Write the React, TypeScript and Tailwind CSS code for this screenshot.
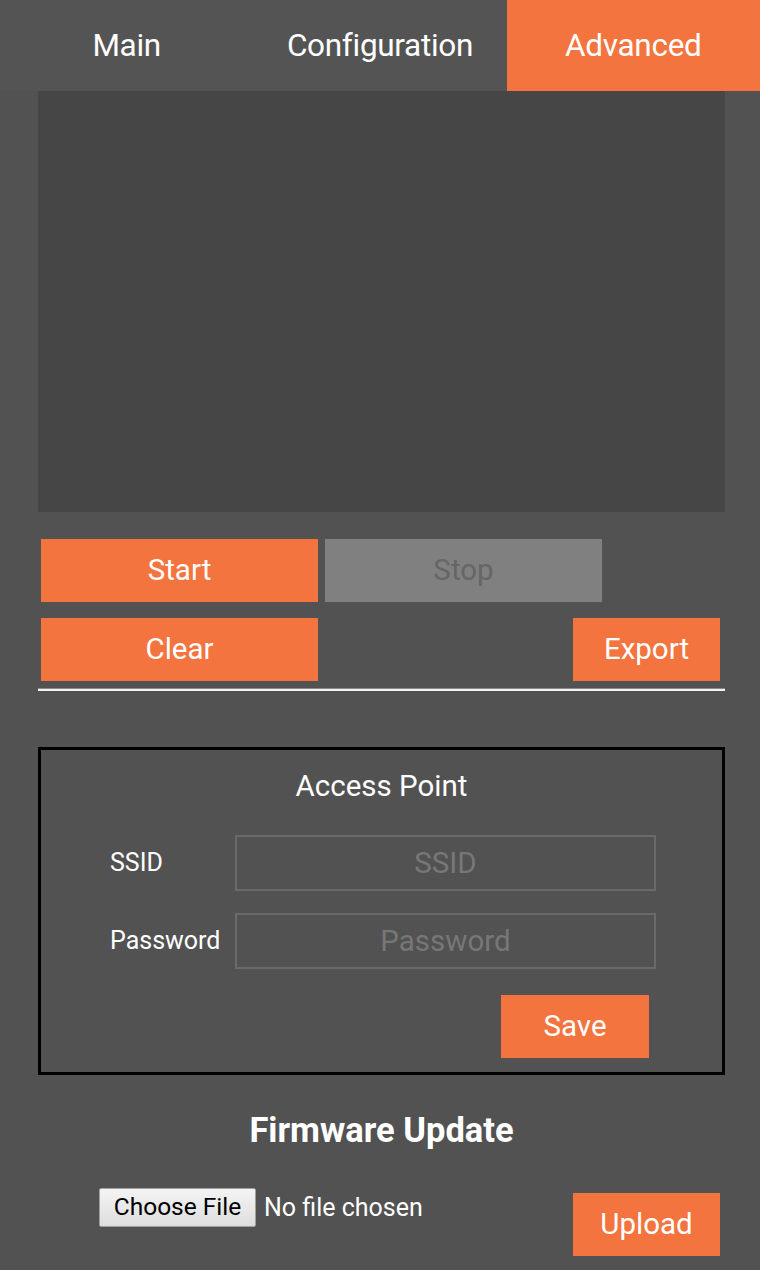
import { useState } from 'react';

const TABS = ['Main', 'Configuration', 'Advanced'];

export default function App() {
    const [tab, setTab] = useState('Advanced');

    return (
        <div className="w-[760px] h-[1270px] bg-[#525252] text-white overflow-hidden" style={{ fontFamily: 'Roboto, "Noto Sans", sans-serif' }}>
            <nav className="flex h-[91px] bg-[#545454]">
                {TABS.map((t) => (
                    <button
                        key={t}
                        onClick={() => setTab(t)}
                        className={`flex-1 text-[31.5px] tracking-[-0.3px] ${tab === t ? 'bg-[#f3743e]' : ''}`}
                    >
                        {t}
                    </button>
                ))}
            </nav>

            <div className="px-[38px] pr-[35px]">
                <div className="h-[421px] bg-[#464646]" />

                <div className="flex gap-[7px] pt-[27px] pl-[3px]">
                    <button className="w-[277px] h-[63px] bg-[#f3743e] text-[29.5px]">Start</button>
                    <button className="w-[277px] h-[63px] bg-[#808080] text-[29.5px] text-[#666666]">Stop</button>
                </div>
                <div className="flex justify-between pt-[16px] pl-[3px] pr-[5px]">
                    <button className="w-[277px] h-[63px] bg-[#f3743e] text-[29.5px]">Clear</button>
                    <button className="w-[147px] h-[63px] bg-[#f3743e] text-[29.5px]">Export</button>
                </div>
                <div className="mt-[7px] border-t border-[#8a8a8a] border-b-2 border-b-[#f2f2f2]" />

                <section className="mt-[56px] h-[328px] border-[3px] border-black flex flex-col">
                    <h3 className="text-[29.5px] text-center pt-[19px] leading-[34px]">Access Point</h3>
                    <div className="flex items-center mt-[32px]">
                        <label className="w-[194px] pl-[69px] text-[25px]">SSID</label>
                        <input
                            placeholder="SSID"
                            className="w-[421px] h-[56px] bg-transparent border-2 border-[#6a6a6a] text-center text-[29.5px] placeholder:text-[#777777] outline-none"
                        />
                    </div>
                    <div className="flex items-center mt-[22px]">
                        <label className="w-[194px] pl-[69px] text-[25px]">Password</label>
                        <input
                            type="password"
                            placeholder="Password"
                            className="w-[421px] h-[56px] bg-transparent border-2 border-[#6a6a6a] text-center text-[29.5px] placeholder:text-[#777777] outline-none"
                        />
                    </div>
                    <div className="flex justify-end pr-[73px] mt-[26px]">
                        <button className="w-[148px] h-[63px] bg-[#f3743e] text-[29.5px]">Save</button>
                    </div>
                </section>

                <h2 className="text-[34.5px] font-bold text-center mt-[35px] leading-[40px]">Firmware Update</h2>

                <div className="flex items-start mt-[37px]">
                    <div className="flex items-center pl-[61px] pt-[1px]">
                        <span className="h-[39px] w-[157px] justify-center flex items-center bg-gradient-to-b from-[#f4f4f4] to-[#dedede] border border-[#a0a0a0] text-black text-[24.5px] rounded-[2px]">
                            Choose File
                        </span>
                        <span className="ml-[8px] text-[25px]">No file chosen</span>
                    </div>
                    <button className="ml-auto mr-[5px] mt-[6px] w-[147px] h-[63px] bg-[#f3743e] text-[29.5px]">Upload</button>
                </div>
            </div>
        </div>
    );
}
